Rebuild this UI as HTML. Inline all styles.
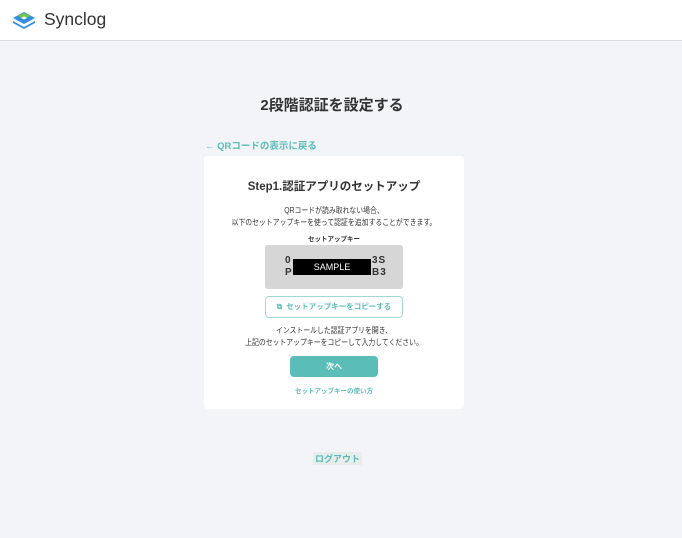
<!DOCTYPE html>
<html><head><meta charset="utf-8"><style>
body{margin:0;width:682px;height:538px;background:#f3f4f7;font-family:"Liberation Sans","Noto Sans CJK JP",sans-serif;position:relative;overflow:hidden;color:#333}
.hdr{position:absolute;left:0;top:0;width:682px;height:40px;background:#fff;border-bottom:1px solid #dcdde2}
.a{position:absolute;white-space:nowrap}
.card{position:absolute;left:204px;top:156px;width:260px;height:253px;background:#fff;border-radius:4px}
.cc{position:absolute;left:0;width:260px;text-align:center;white-space:nowrap}
</style></head><body>
<div class="hdr">
<svg class="a" style="left:11px;top:9px" width="26" height="22" viewBox="0 0 26 22">
<path d="M2 12 L13 18 L24 12 L24 14 L13 20 L2 14Z" fill="#2f8fe0"/>
<path d="M2 9 L13 3 L24 9 L13 15Z" fill="#2f8fe0"/>
<path d="M7 7 L13 4 L19 7 L13 10Z" fill="#7ac943"/>
<path d="M10 9 L13 7.5 L16 9 L13 10.5Z" fill="#fff"/>
</svg>
<div class="a" style="left:44px;top:9px;font-size:17.5px;color:#333">Synclog</div>
</div>
<div class="a" style="top:94px;font-size:15px;font-weight:bold;color:#333;left:-9px;width:682px;text-align:center">2段階認証を設定する</div>
<div class="a" style="left:205px;top:138px;font-size:9.5px;font-weight:bold;color:#5bbdb8">← QRコードの表示に戻る</div>
<div class="card">
<div class="cc" style="top:22px;font-size:11.5px;font-weight:bold">Step1.認証アプリのセットアップ</div>
<div class="cc" style="top:49px;font-size:7.8px;line-height:12px;transform:scaleX(0.88)">QRコードが読み取れない場合、<br>以下のセットアップキーを使って認証を追加することができます。</div>
<div class="cc" style="top:77px;font-size:6.5px;font-weight:bold">セットアップキー</div>
<div style="position:absolute;left:61px;top:89px;width:138px;height:44px;background:#d6d6d6;border-radius:3px"></div>
<div class="a" style="left:81px;top:99px;font-size:10px;font-weight:bold;line-height:12px">0<br>P</div>
<div class="a" style="left:168px;top:99px;font-size:10px;font-weight:bold;line-height:12px;letter-spacing:1px">3S<br>B3</div>
<div style="position:absolute;left:89px;top:103px;width:78px;height:16px;background:#000;color:#fff;font-size:9px;text-align:center;line-height:16px">SAMPLE</div>
<div style="position:absolute;left:61px;top:140px;width:136px;height:20px;border:1px solid #9fd8d4;border-radius:4px;text-align:center;line-height:20px;font-size:7.5px;font-weight:bold;color:#5bbdb8">⧉&nbsp; セットアップキーをコピーする</div>
<div class="cc" style="top:169px;font-size:7.8px;line-height:12px;transform:scaleX(0.88)">インストールした認証アプリを開き、<br>上記のセットアップキーをコピーして入力してください。</div>
<div style="position:absolute;left:86px;top:200px;width:88px;height:21px;background:#5bbdb8;border-radius:4px;color:#fff;text-align:center;line-height:21px;font-size:8px;font-weight:bold">次へ</div>
<div class="cc" style="top:229px;font-size:6.5px;font-weight:bold;color:#5bbdb8">セットアップキーの使い方</div>
</div>
<div class="a" style="left:313px;top:452px;padding:0 2px;background:#e8eceb;font-size:9px;font-weight:bold;color:#5bbdb8">ログアウト</div>
</body></html>
